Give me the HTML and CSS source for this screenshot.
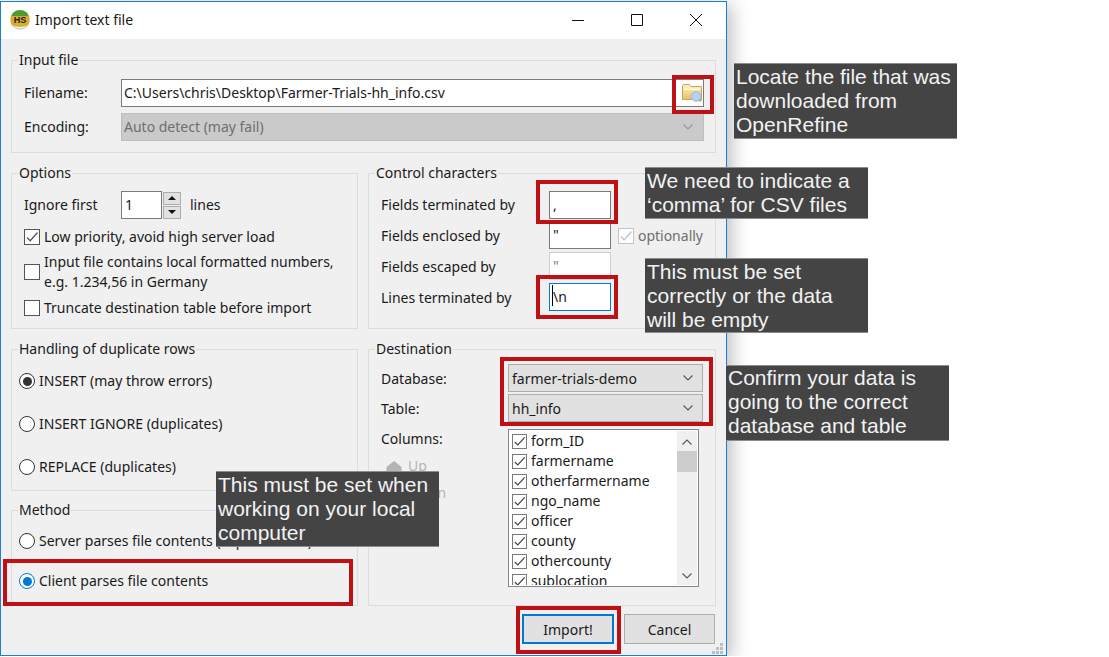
FILE: index.html
```html
<!DOCTYPE html>
<html lang="en">

<head>
    <meta charset="UTF-8">
    <title>Import text file</title>
    <link rel="stylesheet" href="styles.css">
</head>

<body>

    <svg class="defs" width="0" height="0">
        <symbol id="tick" viewBox="0 0 16 16">
            <path d="M3 8.5l3.2 3.2L13.5 3.5" fill="none" stroke="currentColor" stroke-width="1.3"/>
        </symbol>
        <symbol id="chev" viewBox="0 0 12 8">
            <path d="M1.5 1.5L6 6l4.500-4.500" fill="none" stroke="currentColor" stroke-width="1.100"/>
        </symbol>
        <linearGradient id="folderFill" x1="0" y1="0" x2="0" y2="1">
            <stop offset="0" stop-color="#fff3c4"/>
            <stop offset="1" stop-color="#e9bd62"/>
        </linearGradient>
    </svg>

    <div class="dialog">
        <div class="titlebar">
            <svg class="app-icon" width="20" height="20" viewBox="0 0 20 20">
                <circle cx="10" cy="10" r="9.500" fill="#b4b8ae"/>
                <path d="M1 8a9 8 0 0 1 18 0z" fill="#4f9a2c"/>
                <path d="M.6 6h18.800v6a9.400 6 0 0 1-18.800 0z" fill="#d9ab2f"/>
                <path d="M3 15.500a8 6 0 0 0 14 0 9 4 0 0 1-14 0z" fill="#f2f2ee"/>
                <text x="10" y="12.500" class="app-icon-text">HS</text>
            </svg>
            <span class="title">Import text file</span>
            <div class="win-buttons">
                <svg width="14" height="14" viewBox="0 0 14 14"><path d="M1 7.500h12" stroke="#111" fill="none"/></svg>
                <svg width="14" height="14" viewBox="0 0 14 14"><path d="M1.500 1.500h11v11h-11z" stroke="#111" fill="none"/></svg>
                <svg width="14" height="14" viewBox="0 0 14 14"><path d="M1 1l12 12M13 1L1 13" stroke="#111" fill="none"/></svg>
            </div>
        </div>

        <div class="content">
            <fieldset class="group group-input">
                <legend>Input file</legend>
                <div class="file-grid">
                    <span>Filename:</span>
                    <div class="field field-file">
                        <span>C:\Users\chris\Desktop\Farmer-Trials-hh_info.csv</span>
                        <svg class="folder" width="20" height="18" viewBox="0 0 20 18">
                            <path d="M.5 2l1-1.500h6L9 2.500h10.500v13H.5z" fill="url(#folderFill)" stroke="#cfa555"/>
                            <path d="M2 4.500h16v1.500H2z" fill="#fffbe8"/>
                            <path d="M16 14l3 3" stroke="#c89a6a" stroke-width="2.500"/>
                            <circle cx="14" cy="12.500" r="4.800" fill="#b4d0f2" stroke="#9db9dc"/>
                        </svg>
                    </div>
                    <span>Encoding:</span>
                    <div class="field field-disabled">
                        <span>Auto detect (may fail)</span>
                        <svg class="chev chev-disabled" width="12" height="8"><use href="#chev"/></svg>
                    </div>
                </div>
            </fieldset>

            <div class="columns">
                <div class="col">
                    <fieldset class="group group-options">
                        <legend>Options</legend>
                        <div class="row-ignore">
                            <span class="ignore-label">Ignore first</span>
                            <div class="field field-spin">1</div>
                            <div class="spinner">
                                <span class="spin-btn"><i class="arrow-up"></i></span>
                                <span class="spin-btn"><i class="arrow-down"></i></span>
                            </div>
                            <span>lines</span>
                        </div>
                        <label class="opt opt-low"><span class="check"><svg width="16" height="16"><use href="#tick"/></svg></span>Low priority, avoid high server load</label>
                        <label class="opt opt-local"><span class="check"></span><span>Input file contains local formatted numbers,<br>e.g. 1.234,56 in Germany</span></label>
                        <label class="opt opt-trunc"><span class="check"></span>Truncate destination table before import</label>
                    </fieldset>

                    <fieldset class="group group-dupes">
                        <legend>Handling of duplicate rows</legend>
                        <label class="radio-row"><span class="radio radio-on"></span>INSERT (may throw errors)</label>
                        <label class="radio-row"><span class="radio"></span>INSERT IGNORE (duplicates)</label>
                        <label class="radio-row"><span class="radio"></span>REPLACE (duplicates)</label>
                    </fieldset>

                    <fieldset class="group group-method">
                        <legend>Method</legend>
                        <label class="radio-row"><span class="radio"></span>Server parses file contents (experimental)</label>
                        <label class="radio-row"><span class="radio radio-focus"></span>Client parses file contents</label>
                    </fieldset>
                </div>

                <div class="col">
                    <fieldset class="group group-control">
                        <legend>Control characters</legend>
                        <div class="ctl-row"><span class="ctl-label">Fields terminated by</span><div class="field field-ctl">,</div></div>
                        <div class="ctl-row ctl-tight ctl-low"><span class="ctl-label">Fields enclosed by</span><div class="field field-ctl">"</div>
                            <span class="optionally"><span class="check check-disabled"><svg width="16" height="16"><use href="#tick"/></svg></span>optionally</span>
                        </div>
                        <div class="ctl-row ctl-low"><span class="ctl-label">Fields escaped by</span><div class="field field-ctl field-faded">"</div></div>
                        <div class="ctl-row ctl-low"><span class="ctl-label">Lines terminated by</span><div class="field field-ctl field-active"><i class="caret"></i>\n</div></div>
                    </fieldset>

                    <fieldset class="group group-dest">
                        <legend>Destination</legend>
                        <div class="dest-grid">
                            <span class="dest-label">Database:</span>
                            <div class="select"><span class="dest-label">farmer-trials-demo</span><svg class="chev" width="12" height="8"><use href="#chev"/></svg></div>
                            <span class="dest-label">Table:</span>
                            <div class="select"><span class="dest-label">hh_info</span><svg class="chev" width="12" height="8"><use href="#chev"/></svg></div>
                        </div>
                        <div class="columns-row">
                            <div class="columns-side">
                                <span>Columns:</span>
                                <span class="move"><svg width="16" height="10" viewBox="0 0 16 10"><path d="M8 0l7.500 6v4H.5V6z" fill="#b4b4b4"/></svg>Up</span>
                                <span class="move"><svg width="16" height="10" viewBox="0 0 16 10"><path d="M8 10L.5 4V0h15v4z" fill="#b4b4b4"/></svg>Down</span>
                            </div>
                            <div class="column-list">
                                <div class="column-items">
                                    <div class="item"><span class="check check-small"><svg width="15" height="15"><use href="#tick"/></svg></span>form_ID</div>
                                    <div class="item"><span class="check check-small"><svg width="15" height="15"><use href="#tick"/></svg></span>farmername</div>
                                    <div class="item"><span class="check check-small"><svg width="15" height="15"><use href="#tick"/></svg></span>otherfarmername</div>
                                    <div class="item"><span class="check check-small"><svg width="15" height="15"><use href="#tick"/></svg></span>ngo_name</div>
                                    <div class="item"><span class="check check-small"><svg width="15" height="15"><use href="#tick"/></svg></span>officer</div>
                                    <div class="item"><span class="check check-small"><svg width="15" height="15"><use href="#tick"/></svg></span>county</div>
                                    <div class="item"><span class="check check-small"><svg width="15" height="15"><use href="#tick"/></svg></span>othercounty</div>
                                    <div class="item"><span class="check check-small"><svg width="15" height="15"><use href="#tick"/></svg></span>sublocation</div>
                                </div>
                                <div class="scrollbar">
                                    <svg class="scroll-up" width="12" height="8"><use href="#chev"/></svg>
                                    <div class="thumb"></div>
                                    <svg class="scroll-down" width="12" height="8"><use href="#chev"/></svg>
                                </div>
                            </div>
                        </div>
                    </fieldset>
                </div>
            </div>

            <div class="footer">
                <button class="btn btn-default">Import!</button>
                <button class="btn">Cancel</button>
            </div>
            <svg class="grip" width="12" height="11" viewBox="0 0 12 11">
                <path d="M8 0h3v3H8zM4 4h3v3H4zM8 4h3v3H8zM0 8h3v3H0zM4 8h3v3H4zM8 8h3v3H8z" fill="#bdbdbd"/>
            </svg>
        </div>
    </div>

    <!-- red highlight boxes drawn on top of the dialog -->
    <div class="mark mark-file"></div>
    <div class="mark mark-comma"></div>
    <div class="mark mark-lines"></div>
    <div class="mark mark-db"></div>
    <div class="mark mark-client"></div>
    <div class="mark mark-import"></div>

    <!-- notes -->
    <div class="note note-file">Locate the file that was downloaded from OpenRefine</div>
    <div class="note note-comma">We need to indicate a ‘comma’ for CSV files</div>
    <div class="note note-lines">This must be set correctly or the data will be empty</div>
    <div class="note note-db">Confirm your data is going to the correct database and table</div>
    <div class="note note-method">This must be set when working on your local computer</div>

</body>

</html>
```

FILE: styles.css
```css
body {
    margin: 0;
    background-color: #fff;
    font-family: "Noto Sans", sans-serif;
    font-size: 14px;
    line-height: 20px;
    color: #1a1a1a;
    overflow: hidden;
}

.defs {
    display: block;
    height: 0;
}

.dialog {
    position: relative;
    width: 727px;
    height: 655px;
    margin-top: 1px;
    box-sizing: border-box;
    border: 1px solid #1a80d6;
    background-color: #f0f0f0;
    box-shadow: 4px 4px 18px rgba(0, 0, 0, 0.28);
}

.titlebar {
    display: flex;
    align-items: center;
    height: 36px;
    padding: 0 0 1px 9px;
    background-color: #fff;
}

.app-icon {
    margin-right: 5px;
}

.app-icon-text {
    font-family: "Liberation Sans", sans-serif;
    font-size: 9px;
    font-weight: bold;
    text-anchor: middle;
    fill: #222;
}

.title {
    font-size: 14px;
}

.win-buttons {
    display: flex;
    gap: 45px;
    margin-left: auto;
    margin-right: 23px;
}

.content {
    position: relative;
    padding: 13px 10px 0;
}

.group {
    margin: 0;
    padding: 0 12px;
    min-width: 0;
    box-sizing: border-box;
    border: 1px solid #dcdcdc;
}

.group legend {
    margin-left: -6px;
    padding: 0 1px;
    height: 16px;
    line-height: 16px;
}

.group-input {
    height: 101px;
    padding-top: 11px;
    padding-right: 11px;
}

.file-grid {
    display: grid;
    grid-template-columns: 97px 1fr;
    row-gap: 6px;
    align-items: center;
}

.field {
    display: flex;
    align-items: center;
    box-sizing: border-box;
    height: 28px;
    padding-left: 2px;
    background-color: #fff;
    border: 1px solid #7a7a7a;
    white-space: nowrap;
}

.field-file {
    justify-content: space-between;
    padding-right: 1px;
}

.field-disabled {
    justify-content: space-between;
    padding-right: 9px;
    background-color: #cacaca;
    border-color: #bebebe;
    color: #6f6f6f;
}

.chev {
    color: #555;
}

.chev-disabled {
    color: #999;
}

.columns {
    display: grid;
    grid-template-columns: 347px 348px;
    column-gap: 10px;
    margin-top: 12px;
}

.col {
    display: flex;
    flex-direction: column;
}

.group-options {
    height: 164px;
    padding-top: 10px;
}

.row-ignore {
    display: flex;
    align-items: center;
    height: 28px;
}

.ignore-label {
    width: 97px;
}

.field-spin {
    width: 41px;
    padding-left: 3px;
}

.spinner {
    display: flex;
    flex-direction: column;
    gap: 1px;
    width: 18px;
    margin: 0 9px 0 1px;
}

.spin-btn {
    display: flex;
    align-items: center;
    justify-content: center;
    box-sizing: border-box;
    height: 13px;
    background-color: #e1e1e1;
    border: 1px solid #adadad;
}

.arrow-up,
.arrow-down {
    border-left: 4px solid transparent;
    border-right: 4px solid transparent;
}

.arrow-up {
    border-bottom: 4px solid #111;
}

.arrow-down {
    border-top: 4px solid #111;
}

.opt {
    display: flex;
    align-items: center;
    gap: 4px;
}

.opt-low {
    margin-top: 8px;
}

.opt-local {
    margin-top: 5px;
}

.opt-trunc {
    margin-top: 6px;
}

.check {
    display: block;
    flex: none;
    box-sizing: border-box;
    width: 16px;
    height: 16px;
    background-color: #fff;
    border: 1px solid #555;
    color: #555;
}

.check svg {
    display: block;
    margin: -1px;
}

.check-disabled {
    border-color: #c4c4c4;
    color: #c4c4c4;
}

.check-small {
    width: 15px;
    height: 15px;
    border-color: #7a7a7a;
    color: #444;
}

.group-dupes {
    height: 150px;
    margin-top: 12px;
    padding: 14px 7px 0;
}

.group-dupes legend,
.group-method legend {
    margin-left: -1px;
}

.group-method {
    height: 104px;
    margin-top: 11px;
    padding: 13px 7px 0;
}

.radio-row {
    display: flex;
    align-items: center;
    gap: 4px;
    height: 20px;
    white-space: nowrap;
}

.group-dupes .radio-row + .radio-row {
    margin-top: 23px;
}

.group-method .radio-row + .radio-row {
    margin-top: 20px;
}

.radio {
    position: relative;
    flex: none;
    box-sizing: border-box;
    width: 16px;
    height: 16px;
    border: 1px solid #333;
    border-radius: 50%;
    background-color: #fff;
}

.radio-on::after,
.radio-focus::after {
    content: "";
    position: absolute;
    left: 2.5px;
    top: 2.5px;
    width: 9px;
    height: 9px;
    border-radius: 50%;
    background-color: #333;
}

.radio-focus {
    border-color: #0078d7;
}

.radio-focus::after {
    background-color: #0078d7;
}

.group-control {
    height: 164px;
    padding-top: 10px;
}

.ctl-row {
    display: flex;
    align-items: center;
    height: 28px;
    margin-bottom: 3px;
}

.ctl-tight {
    margin-top: -1px;
}

.ctl-label {
    width: 168px;
}

.ctl-low .ctl-label,
.optionally {
    padding-top: 2px;
}

.field-ctl {
    width: 62px;
    padding-left: 3px;
}

.field-faded {
    border-color: #cfcfcf;
    color: #777;
}

.field-active {
    position: relative;
    border-color: #0078d7;
}

.caret {
    position: absolute;
    left: 2px;
    top: 1px;
    height: 21px;
    border-left: 1px solid #000;
}

.optionally {
    display: flex;
    align-items: center;
    gap: 4px;
    margin-left: 7px;
    color: #6d6d6d;
}

.group-dest {
    height: 265px;
    margin-top: 12px;
    padding-top: 7px;
}

.dest-grid {
    display: grid;
    grid-template-columns: 127px 195px;
    row-gap: 2px;
    align-items: center;
}

.dest-label {
    padding-top: 2px;
}

.select {
    display: flex;
    align-items: center;
    justify-content: space-between;
    box-sizing: border-box;
    height: 28px;
    padding: 0 8px 0 3px;
    background-color: #e1e1e1;
    border: 1px solid #adadad;
}

.columns-row {
    display: flex;
    margin-top: 7px;
}

.columns-side {
    display: flex;
    flex-direction: column;
    width: 127px;
}

.move {
    display: flex;
    align-items: center;
    gap: 6px;
    margin: 7px 0 0 5px;
    height: 20px;
    color: #b4b4b4;
}

.column-list {
    display: flex;
    box-sizing: border-box;
    width: 191px;
    height: 158px;
    padding: 1px;
    background-color: #fff;
    border: 1px solid #828790;
}

.column-items {
    flex: 1;
    overflow: hidden;
}

.item {
    display: flex;
    align-items: center;
    gap: 4px;
    height: 20px;
    padding-left: 2px;
}

.scrollbar {
    display: flex;
    flex-direction: column;
    align-items: center;
    width: 20px;
    background-color: #f0f0f0;
}

.scroll-up {
    margin-top: 7px;
    transform: scaleY(-1);
    color: #555;
}

.scroll-down {
    margin-top: auto;
    margin-bottom: 5px;
    color: #555;
}

.thumb {
    width: 100%;
    height: 21px;
    margin-top: 5px;
    background-color: #cdcdcd;
}

.footer {
    display: flex;
    justify-content: flex-end;
    gap: 10px;
    margin-top: 8px;
    margin-right: 1px;
}

.btn {
    box-sizing: border-box;
    width: 91px;
    height: 30px;
    padding: 1px 0 0;
    background-color: #e1e1e1;
    border: 1px solid #adadad;
    font: inherit;
    color: inherit;
}

.btn-default {
    width: 92px;
    border: 2px solid #0078d7;
}

.grip {
    position: absolute;
    right: 2px;
    bottom: -10px;
}

.mark {
    position: absolute;
    box-sizing: border-box;
    border: 4px solid #bd1116;
}

.mark-file {
    left: 672px;
    top: 75px;
    width: 42px;
    height: 39px;
}

.mark-comma {
    left: 536px;
    top: 180px;
    width: 82px;
    height: 44px;
}

.mark-lines {
    left: 536px;
    top: 275px;
    width: 82px;
    height: 44px;
}

.mark-db {
    left: 500px;
    top: 357px;
    width: 213px;
    height: 69px;
}

.mark-client {
    left: 3px;
    top: 559px;
    width: 350px;
    height: 47px;
}

.mark-import {
    left: 516px;
    top: 606px;
    width: 105px;
    height: 48px;
}

.note {
    position: absolute;
    box-sizing: border-box;
    width: 223px;
    padding: 1px 2px 0;
    background-color: #444;
    border-top: 1px solid #8c8c8c;
    border-bottom: 1px solid #8c8c8c;
    font-family: "Liberation Sans", sans-serif;
    font-size: 21px;
    line-height: 24px;
    color: #f2f2f2;
}

.note-file {
    left: 734px;
    top: 63px;
    height: 76px;
}

.note-comma {
    left: 645px;
    top: 167px;
    height: 52px;
}

.note-lines {
    left: 645px;
    top: 258px;
    height: 75px;
}

.note-db {
    left: 726px;
    top: 365px;
    height: 76px;
    padding-top: 0;
}

.note-method {
    left: 216px;
    top: 471px;
    height: 76px;
}
```
